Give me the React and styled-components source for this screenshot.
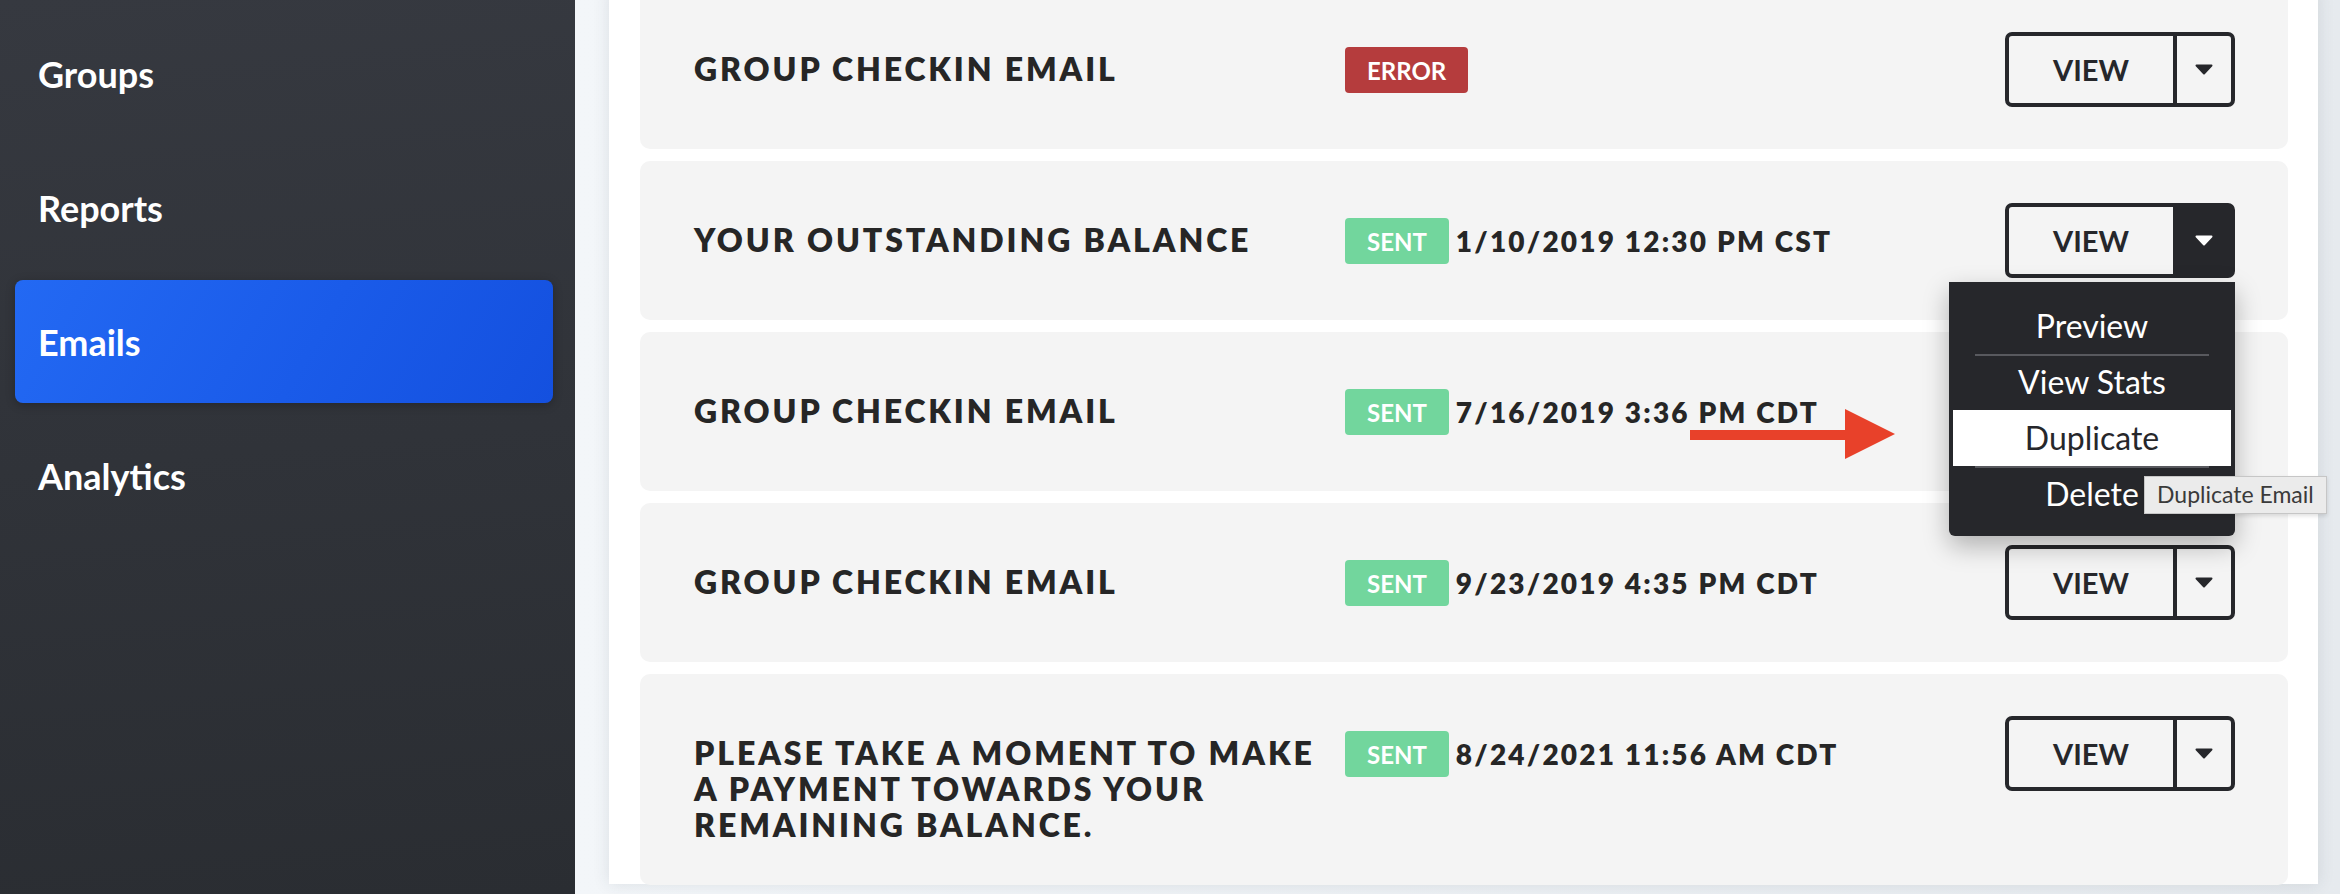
import styled, { createGlobalStyle, css } from "styled-components";

const GlobalStyle = createGlobalStyle`
  html, body {
    margin: 0;
    padding: 0;
    height: 100%;
  }
  body {
    font-family: Lato, "Open Sans", sans-serif;
    background: #eef2f5;
    overflow: hidden;
  }
`;

const Shell = styled.div`
  display: flex;
  height: 894px;
  overflow: hidden;
`;

const Sidebar = styled.nav`
  flex: 0 0 575px;
  background: linear-gradient(175deg, #363940 0%, #2a2d32 100%);
  padding: 12px 22px 0 15px;
  box-sizing: border-box;
`;

const NavItem = styled.a`
  display: flex;
  align-items: center;
  height: 123px;
  margin-bottom: 11px;
  padding-left: 23px;
  border-radius: 8px;
  color: #fff;
  font-size: 36px;
  font-weight: 700;
  text-decoration: none;
  ${(p) =>
    p.$active &&
    css`
      background: linear-gradient(120deg, #2369f3 0%, #1a5be9 55%, #1450df 100%);
      box-shadow: 0 2px 10px rgba(0, 0, 0, 0.25);
    `}
`;

const Main = styled.main`
  flex: 1;
  padding: 0 22px 0 34px;
  background: linear-gradient(90deg, #f3f6f9 0%, #e6eaee 100%);
`;

const Panel = styled.section`
  position: relative;
  height: 100%;
  background: #fff;
  padding: 0 30px 0 31px;
  box-shadow: 0 0 16px rgba(40, 55, 70, 0.12);
`;

const CardList = styled.div`
  display: flex;
  flex-direction: column;
  gap: 12px;
  margin-top: -10px;
`;

const Card = styled.article`
  position: relative;
  display: flex;
  align-items: flex-start;
  background: #f4f4f4;
  border-radius: 10px;
  padding: 42px 53px 42px 54px;
`;

const Title = styled.h3`
  flex: 0 0 631px;
  margin: 0 20px 0 0;
  padding-top: 19px;
  font-size: 32px;
  line-height: 36px;
  font-weight: 800;
  letter-spacing: 2.9px;
  text-transform: uppercase;
  color: #262626;
`;

const Status = styled.div`
  display: flex;
  align-items: center;
  gap: 7px;
  margin-top: 15px;
`;

const Badge = styled.span`
  display: inline-flex;
  align-items: center;
  height: 46px;
  padding: 0 22px;
  border-radius: 4px;
  font-size: 24px;
  font-weight: 700;
  color: #fff;
  text-transform: uppercase;
  background: ${(p) => (p.$kind === "error" ? "#b53c3d" : "#72d69d")};
`;

const SentAt = styled.span`
  font-size: 28px;
  font-weight: 800;
  letter-spacing: 2.2px;
  color: #262626;
`;

const ButtonGroup = styled.div`
  position: relative;
  display: flex;
  margin-left: auto;
  height: 75px;
  box-sizing: border-box;
  border: 4px solid #26272b;
  border-radius: 7px;
`;

const ViewButton = styled.button`
  box-sizing: border-box;
  width: 168px;
  border: none;
  border-right: 4px solid #26272b;
  background: transparent;
  font-family: inherit;
  font-size: 29px;
  font-weight: 700;
  color: #26272b;
  padding: 0;
`;

const CaretButton = styled.button`
  box-sizing: border-box;
  display: flex;
  align-items: center;
  justify-content: center;
  width: 54px;
  border: none;
  padding: 0;
  background: ${(p) => (p.$open ? "#26272b" : "transparent")};
  color: ${(p) => (p.$open ? "#fff" : "#26272b")};
`;

const Menu = styled.ul`
  position: absolute;
  top: calc(100% + 8px);
  right: -4px;
  z-index: 10;
  width: 286px;
  box-sizing: border-box;
  margin: 0;
  padding: 16px 4px 14px;
  list-style: none;
  background: #26272b;
  border-radius: 0 0 6px 6px;
  box-shadow: 0 10px 26px rgba(0, 0, 0, 0.28);
`;

const MenuItem = styled.li`
  position: relative;
  display: flex;
  align-items: center;
  justify-content: center;
  height: 56px;
  font-size: 32px;
  line-height: 1.1;
  font-weight: 400;
  color: #fff;
  ${(p) =>
    p.$divider &&
    css`
      &::before {
        content: "";
        position: absolute;
        top: 0;
        left: 22px;
        right: 22px;
        height: 2px;
        background: #58595e;
      }
    `}
  ${(p) =>
    p.$hover &&
    css`
      background: #fff;
      color: #26272b;
    `}
`;

const Tooltip = styled.div`
  position: absolute;
  top: 194px;
  left: 195px;
  height: 38px;
  box-sizing: border-box;
  display: flex;
  align-items: center;
  padding: 0 12px;
  white-space: nowrap;
  background: #ebebeb;
  border: 1px solid #c6c6c6;
  box-shadow: 0 2px 4px rgba(0, 0, 0, 0.12);
  font-size: 23px;
  line-height: 1.1;
  color: #3a3a3a;
`;

const Arrow = styled.svg`
  position: absolute;
  left: 1050px;
  top: 77px;
  z-index: 5;
`;

function Caret() {
  return (
    <svg width="18" height="11" viewBox="0 0 18 11">
      <path d="M1.5 1.5 H16.5 L9 9.5 Z" fill="currentColor" stroke="currentColor" strokeWidth="2" strokeLinejoin="round" />
    </svg>
  );
}

const emails = [
  { title: "Group Checkin Email", status: "error" },
  { title: "Your Outstanding Balance", status: "sent", date: "1/10/2019 12:30 PM CST", open: true },
  { title: "Group Checkin Email", status: "sent", date: "7/16/2019 3:36 PM CDT", arrow: true },
  { title: "Group Checkin Email", status: "sent", date: "9/23/2019 4:35 PM CDT" },
  { title: "Please take a moment to make a payment towards your remaining balance.", status: "sent", date: "8/24/2021 11:56 AM CDT" },
];

function EmailCard({ email }) {
  return (
    <Card>
      <Title>{email.title}</Title>
      <Status>
        <Badge $kind={email.status}>{email.status}</Badge>
        {email.date && <SentAt>{email.date}</SentAt>}
      </Status>
      <ButtonGroup>
        <ViewButton>VIEW</ViewButton>
        <CaretButton $open={email.open}>
          <Caret />
        </CaretButton>
        {email.open && (
          <Menu>
            <MenuItem>Preview</MenuItem>
            <MenuItem $divider>View Stats</MenuItem>
            <MenuItem $hover>Duplicate</MenuItem>
            <MenuItem $divider>Delete</MenuItem>
            <Tooltip>Duplicate Email</Tooltip>
          </Menu>
        )}
      </ButtonGroup>
      {email.arrow && (
        <Arrow width="205" height="50" viewBox="0 0 205 50">
          <rect x="0" y="21" width="157" height="10" fill="#e8412a" />
          <polygon points="155,0 205,25 155,50" fill="#e8412a" />
        </Arrow>
      )}
    </Card>
  );
}

export default function App() {
  return (
    <>
      <GlobalStyle />
      <Shell>
        <Sidebar>
          <NavItem>Groups</NavItem>
          <NavItem>Reports</NavItem>
          <NavItem $active>Emails</NavItem>
          <NavItem>Analytics</NavItem>
        </Sidebar>
        <Main>
          <Panel>
            <CardList>
              {emails.map((e, i) => (
                <EmailCard key={i} email={e} />
              ))}
            </CardList>
          </Panel>
        </Main>
      </Shell>
    </>
  );
}
